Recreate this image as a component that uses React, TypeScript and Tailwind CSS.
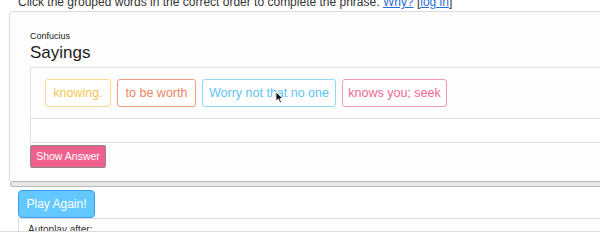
import React from "react";

const words = [
  { text: "knowing.", cls: "border-[#fbd98a] text-[#f6c452] w-[66px]" },
  { text: "to be worth", cls: "border-[#ee9d84] text-[#e98566] w-[79px]" },
  { text: "Worry not that no one", cls: "border-[#90d9f8] text-[#5ec4f3] w-[134px]" },
  { text: "knows you; seek", cls: "border-[#f49ab4] text-[#ed6892] w-[105px]" },
];

export default function App() {
  return (
    <div className="relative w-[600px] h-[232px] overflow-hidden bg-white font-['Liberation_Sans',Arial,sans-serif]">
      <p className="pl-[18px] -mt-[5px] h-[16px] text-[12px] leading-[14px] text-[#333] whitespace-nowrap">
        Click the grouped words in the correct order to complete the phrase.{" "}
        <a className="text-[#2a6fd6] underline">Why?</a> [
        <a className="text-[#2a6fd6] underline">log in</a>]
      </p>

      <div className="ml-[9px] h-[170px] border-t border-l border-[#dcdcdc] rounded-tl-[4px] bg-[#fdfdfd] pl-[20px] pt-[19px]">
        <div className="text-[9px] leading-[10px] text-[#222]">Confucius</div>
        <div className="text-[17px] leading-[20px] text-[#1c1c1c] mt-[2px]">Sayings</div>

        <div className="mt-[4px] border-t border-l border-[#e2e2e2]">
          <div className="flex gap-[6px] pl-[14px] pt-[11px] h-[50px]">
            {words.map((w) => (
              <div
                key={w.text}
                className={`h-[28px] flex items-center justify-center border rounded-[3px] bg-white text-[12.5px] ${w.cls}`}
              >
                {w.text}
              </div>
            ))}
          </div>
          <div className="h-[25px] border-t border-b border-[#e2e2e2] bg-white" />
        </div>

        <button className="w-[76px] h-[23px] rounded-[2px] border border-[#8a8a8a] bg-[#f0608e] text-white text-[10.5px] leading-[21px]">
          Show Answer
        </button>
      </div>

      <div className="ml-[10px] h-[6px] border border-r-0 border-[#b9b9b9] rounded-l-full bg-[#e8e8e8]" />

      <button className="ml-[18px] mt-[3px] w-[77px] h-[28px] rounded-[4px] border border-[#3a9df4] bg-[#62c8ff] text-white text-[12px]">
        Play Again!
      </button>

      <div className="h-[14px] border-b border-[#dedede] overflow-hidden">
        <div className="ml-[18px] h-full border-t border-l border-[#dcdce8] pl-[9px] pt-[5px] text-[10px] leading-[12px] text-[#333]">
          Autoplay after:
        </div>
      </div>

      <svg className="absolute left-[275px] top-[91px]" width="9" height="13" viewBox="0 0 9 13">
        <path d="M1 1 L1 10 L3.3 8 L5 12 L6.5 11.3 L4.9 7.5 L8 7.5 Z" fill="#111" stroke="#fff" strokeWidth="0.8" />
      </svg>
    </div>
  );
}
